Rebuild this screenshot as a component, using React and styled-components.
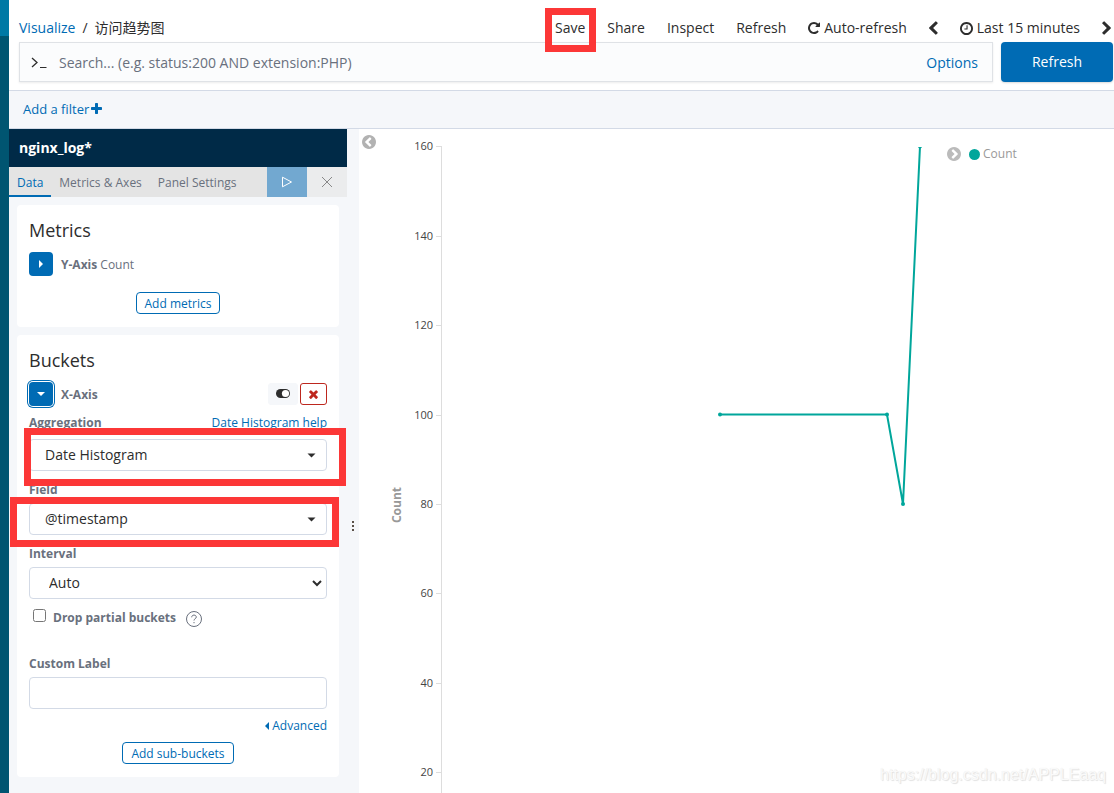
import React, { useState } from 'react';
import styled, { createGlobalStyle, css } from 'styled-components';

const GlobalStyle = createGlobalStyle`
  *, *::before, *::after {
    box-sizing: border-box;
  }

  body {
    margin: 0;
    background: #fff;
    color: #2d2d2d;
    font-family: 'Open Sans', 'Noto Sans CJK SC', sans-serif;
    font-size: 14px;
    line-height: 20px;
  }

  button, input, select {
    font: inherit;
    color: inherit;
    margin: 0;
  }

  button {
    background: none;
    border: 0;
    padding: 0;
    cursor: pointer;
  }

  a {
    color: #006bb4;
    text-decoration: none;
  }

  h2, h3 {
    margin: 0;
  }

  svg {
    display: block;
    flex: none;
  }
`;

const Shell = styled.div`
  display: flex;
  height: 100vh;
  overflow: hidden;
  position: relative;
`;

const GlobalNav = styled.aside`
  flex: none;
  width: 9px;
  background: #005571;
`;

const NavLogo = styled.div`
  height: 36px;
  background: #0079a5;
`;

const Main = styled.main`
  flex: 1;
  min-width: 0;
  display: flex;
  flex-direction: column;
`;

const TopNav = styled.header`
  display: flex;
  justify-content: space-between;
  align-items: center;
  height: 42px;
  padding: 14px 3px 0 10px;
`;

const Breadcrumbs = styled.nav`
  display: flex;
  gap: 7px;
`;

const TopMenu = styled.div`
  display: flex;
  align-items: center;
  gap: 22px;
`;

const MenuButton = styled.button`
  display: flex;
  align-items: center;
  gap: 4px;
  position: relative;
`;

/* red frame drawn on top of a control */
const Highlight = styled.span`
  position: absolute;
  z-index: 2;
  inset: ${({ $inset }) => $inset};
  border: 7px solid #fc3737;
  pointer-events: none;
`;

const QueryBar = styled.form`
  display: flex;
  gap: 8px;
  padding: 0 1px 8px 10px;
  border-bottom: 1px solid #d3dae6;
`;

const SearchBox = styled.div`
  flex: 1;
  display: flex;
  align-items: center;
  gap: 12px;
  height: 40px;
  padding: 2px 14px 0 11px;
  background: #fbfcfd;
  border: 1px solid #dfe2e6;
  box-shadow: 0 1px 2px rgba(0, 0, 0, 0.08);
`;

const SearchInput = styled.input`
  flex: 1;
  min-width: 0;
  padding: 0;
  border: 0;
  outline: 0;
  background: transparent;

  &::placeholder {
    color: #69707d;
    opacity: 1;
  }
`;

const LinkButton = styled.button`
  color: #006bb4;
`;

const SubmitButton = styled.button`
  width: 112px;
  height: 40px;
  border-radius: 4px;
  background: #006bb4;
  color: #fff;
  box-shadow: 0 1px 2px rgba(0, 0, 0, 0.15);
`;

const FilterBar = styled.div`
  display: flex;
  align-items: center;
  height: 38px;
  padding: 0 14px 2px;
  background: #f5f7fa;
  border-bottom: 1px solid #d3dae6;
`;

const AddFilter = styled.button`
  display: flex;
  align-items: center;
  gap: 2px;
  font-size: 13px;
  color: #006bb4;
`;

const Workspace = styled.div`
  flex: 1;
  min-height: 0;
  display: flex;
`;

const Editor = styled.section`
  flex: none;
  width: 338px;
  background: #f5f7fa;
`;

const IndexPattern = styled.h2`
  height: 38px;
  padding: 0 10px;
  background: #002a47;
  color: #fff;
  font-size: 14px;
  font-weight: 700;
  line-height: 38px;
`;

const Tabs = styled.div`
  display: flex;
  height: 30px;
  background: #e4e4e4;
`;

const Tab = styled.button`
  padding: 4px 8px 0;
  font-size: 12px;
  color: ${({ $active }) => ($active ? '#006bb4' : '#69707d')};
  border-bottom: 2px solid ${({ $active }) => ($active ? '#006bb4' : 'transparent')};
`;

const TabAction = styled.button`
  display: flex;
  align-items: center;
  justify-content: center;
  width: 40px;
  background: ${({ $primary }) => ($primary ? '#72a8d0' : '#ebeced')};
`;

const TabActions = styled.div`
  display: flex;
  margin-left: auto;
`;

const Panels = styled.div`
  display: flex;
  flex-direction: column;
  gap: 8px;
  padding: 8px;
`;

const Panel = styled.section`
  display: flex;
  flex-direction: column;
  padding: 12px 12px 13px;
  background: #fff;
  border-radius: 4px;
`;

const PanelTitle = styled.h3`
  font-size: 18px;
  font-weight: 400;
  line-height: 27px;
`;

const AggRow = styled.div`
  display: flex;
  align-items: center;
  gap: 8px;
  height: 24px;
  margin-top: 8px;
  font-size: 12px;
  color: #69707d;
`;

const AggName = styled.span`
  flex: 1;
  padding-top: 2px;
`;

const ExpandButton = styled.button`
  display: flex;
  align-items: center;
  justify-content: center;
  width: 24px;
  height: 24px;
  border-radius: 4px;
  background: #006bb4;
  color: #fff;
  ${({ $focused }) =>
        $focused &&
        css`
          box-shadow: 0 0 0 1px #fff, 0 0 0 2px #006bb4;
        `}
`;

const AggActions = styled.div`
  display: flex;
  gap: 2px;
`;

const AggAction = styled.button`
  display: flex;
  align-items: center;
  justify-content: center;
  width: ${({ $danger }) => ($danger ? '27px' : '30px')};
  height: 22px;
  border-radius: 3px;
  background: ${({ $danger }) => ($danger ? '#fff' : '#f5f7fa')};
  border: 1px solid ${({ $danger }) => ($danger ? '#bd271e' : '#f5f7fa')};
`;

const OutlineButton = styled.button`
  align-self: center;
  height: 22px;
  margin-top: ${({ $top }) => $top};
  padding: 2px 8px 0;
  border: 1px solid #006bb4;
  border-radius: 4px;
  background: #fff;
  color: #006bb4;
  font-size: 12px;
  line-height: 18px;
`;

const Field = styled.div`
  display: flex;
  flex-direction: column;
  margin-top: ${({ $top }) => $top};
`;

const FieldHead = styled.div`
  display: flex;
  justify-content: space-between;
  margin-bottom: ${({ $gap }) => $gap || '3px'};
  font-size: 12px;

  label {
    color: #69707d;
    font-weight: 700;
  }
`;

const Control = styled.div`
  display: flex;
  align-items: center;
  position: relative;

  svg {
    position: absolute;
    right: ${({ $native }) => ($native ? '5px' : '11px')};
    pointer-events: none;
  }
`;

const controlBox = css`
  width: 100%;
  height: 32px;
  background: #fff;
  border: 1px solid #d3dae6;
  border-radius: 4px;
`;

const Select = styled.select`
  ${controlBox}
  appearance: none;
  padding: 0 28px 0 ${({ $indent }) => $indent || '15px'};
`;

const TextInput = styled.input`
  ${controlBox}
  padding: 0 12px;
`;

const CheckRow = styled.div`
  display: flex;
  align-items: center;
  gap: 7px;
  height: 20px;
  margin-top: 9px;
  padding-left: 4px;
  font-size: 12px;
  font-weight: 700;
  color: #69707d;

  input {
    width: 13px;
    height: 13px;
    margin-bottom: 5px;
  }

  svg {
    margin: 2px 0 0 3px;
  }
`;

const Advanced = styled.button`
  display: flex;
  align-items: center;
  align-self: flex-end;
  gap: 3px;
  margin-top: 7px;
  font-size: 12px;
  color: #006bb4;
`;

const Resizer = styled.div`
  flex: none;
  display: flex;
  align-items: center;
  justify-content: center;
  width: 12px;
  padding-top: 130px;
  background: #f5f7fa;
`;

const VisPane = styled.section`
  flex: 1;
  min-width: 0;
  display: flex;
  overflow: hidden;
`;

const PaneToggle = styled.button`
  flex: none;
  align-self: flex-start;
  margin: 6px 5px 6px 3px;
  color: #b2b2b2;
`;

const Plot = styled.svg`
  flex: 1;
  min-width: 0;
  height: 720px;
`;

const TickLabel = styled.text`
  font-size: 11px;
  fill: #444;
  text-anchor: end;
`;

const AxisTitle = styled.text`
  font-size: 12px;
  font-weight: 700;
  fill: #999;
  text-anchor: middle;
`;

const Legend = styled.div`
  flex: none;
  display: flex;
  align-items: center;
  gap: 8px;
  width: 167px;
  height: 20px;
  margin-top: 15px;
  font-size: 12px;
  color: #999;
`;

const LegendToggle = styled.button`
  color: #bbb;
`;

const LegendItem = styled.button`
  display: flex;
  align-items: center;
  gap: 3px;

  &::before {
    content: '';
    width: 11px;
    height: 11px;
    border-radius: 50%;
    background: #00a69b;
  }
`;

const Watermark = styled.div`
  position: absolute;
  right: 8px;
  bottom: 8px;
  font-family: 'Liberation Sans', sans-serif;
  font-size: 16px;
  color: #fafafa;
  text-shadow: 1px 1px 1px #e0e0e0, 0 0 1px #e6e6e6;
  pointer-events: none;
`;

const icons = {
    repeat:
        'M1664 256v448q0 26-19 45t-45 19h-448q-42 0-59-40-17-39 14-69l138-138q-148-137-349-137-104 0-198.5 40.5t-163.5 109.5-109.5 163.5-40.5 198.5 40.5 198.5 109.5 163.5 163.5 109.5 198.5 40.5q119 0 225-52t179-147q7-10 23-12 15 0 25 9l137 138q9 8 9.5 20.5t-7.5 22.5q-109 132-264 204.5t-327 72.5q-156 0-298-61t-245-164-164-245-61-298 61-298 164-245 245-164 298-61q147 0 284.5 55.5t244.5 156.5l130-129q29-31 70-14 39 17 39 59z',
    clock:
        'M1024 544v448q0 14-9 23t-23 9h-320q-14 0-23-9t-9-23v-64q0-14 9-23t23-9h224v-352q0-14 9-23t23-9h64q14 0 23 9t9 23zm416 352q0-148-73-273t-198-198-273-73-273 73-198 198-73 273 73 273 198 198 273 73 273-73 198-198 73-273zm224 0q0 209-103 385.5t-279.5 279.5-385.5 103-385.5-103-279.5-279.5-103-385.5 103-385.5 279.5-279.5 385.5-103 385.5 103 279.5 279.5 103 385.5z',
    plus:
        'M1600 736v192q0 40-28 68t-68 28h-416v416q0 40-28 68t-68 28h-192q-40 0-68-28t-28-68v-416h-416q-40 0-68-28t-28-68v-192q0-40 28-68t68-28h416v-416q0-40 28-68t68-28h192q40 0 68 28t28 68v416h416q40 0 68 28t28 68z',
    chevronLeft:
        'M1427 301l-531 531 531 531q19 19 19 45t-19 45l-166 166q-19 19-45 19t-45-19l-742-742q-19-19-19-45t19-45l742-742q19-19 45-19t45 19l166 166q19 19 19 45t-19 45z',
    chevronRight:
        'M1363 877l-742 742q-19 19-45 19t-45-19l-166-166q-19-19-19-45t19-45l531-531-531-531q-19-19-19-45t19-45l166-166q19-19 45-19t45 19l742 742q19 19 19 45t-19 45z',
    times:
        'M1490 1322q0 40-28 68l-136 136q-28 28-68 28t-68-28l-294-294-294 294q-28 28-68 28t-68-28l-136-136q-28-28-28-68t28-68l294-294-294-294q-28-28-28-68t28-68l136-136q28-28 68-28t68 28l294 294 294-294q28-28 68-28t68 28l136 136q28 28 28 68t-28 68l-294 294 294 294q28 28 28 68z',
    circleLeft:
        'M1037 1395l102-102q19-19 19-45t-19-45l-307-307 307-307q19-19 19-45t-19-45l-102-102q-19-19-45-19t-45 19l-454 454q-19 19-19 45t19 45l454 454q19 19 45 19t45-19zm627-499q0 209-103 385.5t-279.5 279.5-385.5 103-385.5-103-279.5-279.5-103-385.5 103-385.5 279.5-279.5 385.5-103 385.5 103 279.5 279.5 103 385.5z',
    circleRight:
        'M845 1395l454-454q19-19 19-45t-19-45l-454-454q-19-19-45-19t-45 19l-102 102q-19 19-19 45t19 45l307 307-307 307q-19 19-19 45t19 45l102 102q19 19 45 19t45-19zm819-499q0 209-103 385.5t-279.5 279.5-385.5 103-385.5-103-279.5-279.5-103-385.5 103-385.5 279.5-279.5 385.5-103 385.5 103 279.5 279.5 103 385.5z',
};

// crop trims the side bearings of the 1792 unit glyph box
const Icon = ({ name, width = 14, height = 14, color = 'currentColor', crop = '128 128 1536 1536' }) => (
    <svg width={width} height={height} viewBox={crop} fill={color} aria-hidden="true">
        <path d={icons[name]} />
    </svg>
);

const Caret = () => (
    <svg width="9" height="5" viewBox="0 0 9 5" fill="#2d2d2d" aria-hidden="true">
        <path d="M0.5 0.5h8L4.5 4.5z" />
    </svg>
);

const TICKS = [160, 140, 120, 100, 80, 60, 40, 20];
const SERIES = [
    { x: 339, value: 100 },
    { x: 506, value: 100 },
    { x: 522, value: 80 },
    { x: 539, value: 160 },
];

const scaleY = (value) => 17.4 + (160 - value) * 4.47;

const LineChart = () => (
    <Plot role="img" aria-label="Count over time">
        <AxisTitle transform="translate(20 376) rotate(-90)">Count</AxisTitle>
        <path d="M60.5 17V720" stroke="#ddd" fill="none" />
        {TICKS.map((tick) => {
            const y = Math.round(scaleY(tick)) + 0.5;
            return (
                <g key={tick}>
                    <path d={`M55 ${y}h6`} stroke="#ddd" />
                    <TickLabel x="52" y={y + 3}>{tick}</TickLabel>
                </g>
            );
        })}
        <clipPath id="plot-area">
            <rect x="61" y="18" width="520" height="702" />
        </clipPath>
        <g clipPath="url(#plot-area)" fill="#00a69b">
            <polyline
                points={SERIES.map(({ x, value }) => `${x},${scaleY(value)}`).join(' ')}
                fill="none"
                stroke="#00a69b"
                strokeWidth="2"
            />
            {SERIES.map(({ x, value }) => (
                <circle key={x} cx={x} cy={scaleY(value)} r="2" />
            ))}
        </g>
    </Plot>
);

const App = () => {
    const [query, setQuery] = useState('');
    const [dropPartials, setDropPartials] = useState(false);
    const [customLabel, setCustomLabel] = useState('');
    const [activeTab, setActiveTab] = useState('Data');

    return (
        <Shell>
            <GlobalStyle />
            <GlobalNav>
                <NavLogo />
            </GlobalNav>
            <Main>
                <TopNav>
                    <Breadcrumbs>
                        <a href="#visualize">Visualize</a>
                        <span>/</span>
                        <span>访问趋势图</span>
                    </Breadcrumbs>
                    <TopMenu>
                        <MenuButton>
                            Save
                            <Highlight $inset="-10px -11px -14px -10px" />
                        </MenuButton>
                        <MenuButton>Share</MenuButton>
                        <MenuButton>Inspect</MenuButton>
                        <MenuButton>Refresh</MenuButton>
                        <MenuButton>
                            <Icon name="repeat" width={12} height={12} />
                            Auto-refresh
                        </MenuButton>
                        <MenuButton aria-label="Previous period">
                            <Icon name="chevronLeft" width={9} height={14} crop="410 0 1060 1664" />
                        </MenuButton>
                        <MenuButton>
                            <Icon name="clock" width={13} height={13} />
                            Last 15 minutes
                        </MenuButton>
                        <MenuButton aria-label="Next period">
                            <Icon name="chevronRight" width={9} height={14} crop="330 0 1060 1664" />
                        </MenuButton>
                    </TopMenu>
                </TopNav>

                <QueryBar onSubmit={(e) => e.preventDefault()}>
                    <SearchBox>
                        <svg width="16" height="16" viewBox="0 0 16 16" fill="none" stroke="#2d2d2d" aria-hidden="true">
                            <path d="M1 3l5 4.5L1 12" strokeWidth="1.3" />
                            <path d="M9 12.5h6.5" />
                        </svg>
                        <SearchInput
                            aria-label="Search"
                            placeholder="Search... (e.g. status:200 AND extension:PHP)"
                            value={query}
                            onChange={(e) => setQuery(e.target.value)}
                        />
                        <LinkButton type="button">Options</LinkButton>
                    </SearchBox>
                    <SubmitButton type="submit">Refresh</SubmitButton>
                </QueryBar>

                <FilterBar>
                    <AddFilter>
                        Add a filter
                        <Icon name="plus" width={11} height={11} crop="192 128 1408 1408" />
                    </AddFilter>
                </FilterBar>

                <Workspace>
                    <Editor>
                        <IndexPattern>nginx_log*</IndexPattern>
                        <Tabs>
                            {['Data', 'Metrics & Axes', 'Panel Settings'].map((tab) => (
                                <Tab key={tab} $active={tab === activeTab} onClick={() => setActiveTab(tab)}>
                                    {tab}
                                </Tab>
                            ))}
                            <TabActions>
                                <TabAction $primary aria-label="Apply changes">
                                    <svg width="12" height="12" viewBox="0 0 12 12" fill="none" stroke="#fff" aria-hidden="true">
                                        <path d="M1.5 1.2v9.6L10.5 6z" strokeLinejoin="round" />
                                    </svg>
                                </TabAction>
                                <TabAction aria-label="Discard changes">
                                    <svg width="12" height="12" viewBox="0 0 12 12" fill="none" stroke="#888" aria-hidden="true">
                                        <path d="M1 1l10 10M11 1L1 11" />
                                    </svg>
                                </TabAction>
                            </TabActions>
                        </Tabs>

                        <Panels>
                            <Panel>
                                <PanelTitle>Metrics</PanelTitle>
                                <AggRow>
                                    <ExpandButton aria-label="Expand Y-Axis">
                                        <svg width="4" height="8" viewBox="0 0 4 8" fill="#fff" aria-hidden="true">
                                            <path d="M0 0l4 4-4 4z" />
                                        </svg>
                                    </ExpandButton>
                                    <AggName><b>Y-Axis</b> Count</AggName>
                                </AggRow>
                                <OutlineButton $top="16px">Add metrics</OutlineButton>
                            </Panel>

                            <Panel>
                                <PanelTitle>Buckets</PanelTitle>
                                <AggRow>
                                    <ExpandButton $focused aria-label="Collapse X-Axis">
                                        <svg width="8" height="4" viewBox="0 0 8 4" fill="#fff" aria-hidden="true">
                                            <path d="M0 0h8L4 4z" />
                                        </svg>
                                    </ExpandButton>
                                    <AggName><b>X-Axis</b></AggName>
                                    <AggActions>
                                        <AggAction aria-label="Disable aggregation">
                                            <svg width="14" height="10" viewBox="0 0 14 10" aria-hidden="true">
                                                <rect x="0" y="0" width="14" height="9" rx="4.5" fill="#2d2d2d" />
                                                <circle cx="9.5" cy="4.5" r="3.6" fill="#fff" />
                                            </svg>
                                        </AggAction>
                                        <AggAction $danger aria-label="Remove dimension">
                                            <Icon name="times" width={9} height={10} color="#bd271e" crop="302 200 1188 1354" />
                                        </AggAction>
                                    </AggActions>
                                </AggRow>

                                <Field $top="7px">
                                    <FieldHead $gap="6px">
                                        <label htmlFor="aggregation">Aggregation</label>
                                        <a href="#date-histogram">Date Histogram help</a>
                                    </FieldHead>
                                    <Control>
                                        <Select id="aggregation">
                                            <option>Date Histogram</option>
                                        </Select>
                                        <Caret />
                                        <Highlight $inset="-11px -19px -15px -5px" />
                                    </Control>
                                </Field>

                                <Field $top="9px">
                                    <FieldHead>
                                        <label htmlFor="field">Field</label>
                                    </FieldHead>
                                    <Control>
                                        <Select id="field">
                                            <option>@timestamp</option>
                                        </Select>
                                        <Caret />
                                        <Highlight $inset="-6px -12px -12px -19px" />
                                    </Control>
                                </Field>

                                <Field $top="9px">
                                    <FieldHead>
                                        <label htmlFor="interval">Interval</label>
                                    </FieldHead>
                                    <Control $native>
                                        <Select id="interval" $indent="19px">
                                            <option>Auto</option>
                                        </Select>
                                        <svg width="10" height="7" viewBox="0 0 10 7" fill="none" stroke="#2d2d2d" strokeWidth="2" aria-hidden="true">
                                            <path d="M1 1l4 4 4-4" />
                                        </svg>
                                    </Control>
                                </Field>

                                <CheckRow>
                                    <input
                                        id="drop-partials"
                                        type="checkbox"
                                        checked={dropPartials}
                                        onChange={(e) => setDropPartials(e.target.checked)}
                                    />
                                    <label htmlFor="drop-partials">Drop partial buckets</label>
                                    <svg width="16" height="16" viewBox="0 0 16 16" fill="none" stroke="#69707d" aria-hidden="true">
                                        <circle cx="8" cy="8" r="7.5" />
                                        <path d="M5.7 6.3c0-1.4 1-2.2 2.3-2.2s2.3.8 2.3 2c0 1.6-2.3 1.6-2.3 3.4M8 11v1.2" />
                                    </svg>
                                </CheckRow>

                                <Field $top="26px">
                                    <FieldHead>
                                        <label htmlFor="custom-label">Custom Label</label>
                                    </FieldHead>
                                    <TextInput
                                        id="custom-label"
                                        type="text"
                                        value={customLabel}
                                        onChange={(e) => setCustomLabel(e.target.value)}
                                    />
                                </Field>

                                <Advanced>
                                    <svg width="4" height="8" viewBox="0 0 4 8" fill="#006bb4" aria-hidden="true">
                                        <path d="M4 0L0 4l4 4z" />
                                    </svg>
                                    Advanced
                                </Advanced>
                                <OutlineButton $top="6px">Add sub-buckets</OutlineButton>
                            </Panel>
                        </Panels>
                    </Editor>

                    <Resizer>
                        <svg width="2" height="10" viewBox="0 0 2 10" fill="#5a5048" aria-hidden="true">
                            <path d="M0 0h2v2H0zM0 4h2v2H0zM0 8h2v2H0z" />
                        </svg>
                    </Resizer>

                    <VisPane>
                        <PaneToggle aria-label="Collapse editor">
                            <Icon name="circleLeft" />
                        </PaneToggle>
                        <LineChart />
                        <Legend>
                            <LegendToggle aria-label="Toggle legend">
                                <Icon name="circleRight" />
                            </LegendToggle>
                            <LegendItem>Count</LegendItem>
                        </Legend>
                    </VisPane>
                </Workspace>
            </Main>
            <Watermark>https://blog.csdn.net/APPLEaaq</Watermark>
        </Shell>
    );
};

export default App;
